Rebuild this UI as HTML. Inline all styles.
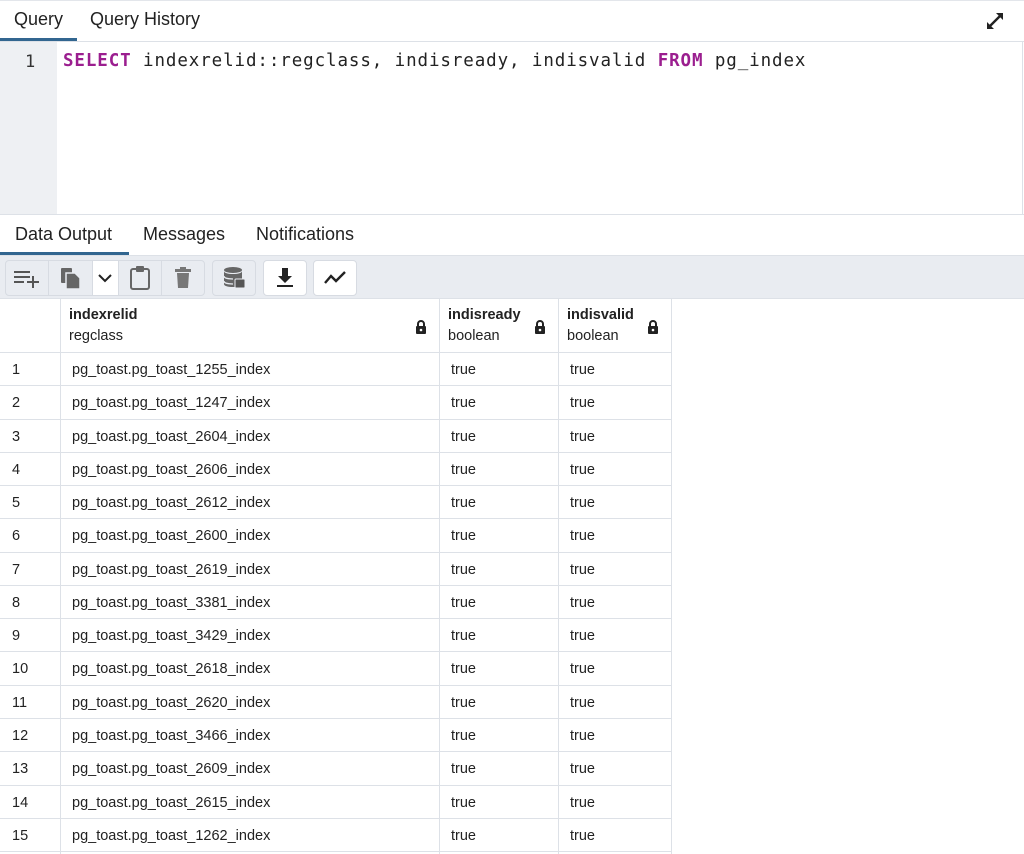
<!DOCTYPE html>
<html><head><meta charset="utf-8"><style>
*{box-sizing:border-box;margin:0;padding:0}
body{width:1024px;height:854px;overflow:hidden;background:#fff;font-family:"Liberation Sans",sans-serif;color:#222;position:relative}
.abs{position:absolute}
.tab{position:absolute;font-size:18px;color:#222;top:9px}
.mono{font-family:"DejaVu Sans Mono","Liberation Mono",monospace}
.btn{position:absolute;top:260px;height:36px;border:1px solid #d7dbe2;background:#e9ecf1;border-radius:4px}
.btnw{background:#fff}
.cell{position:absolute;font-size:14.5px;color:#222}
.hl{position:absolute;height:1px;background:#dde1e7}
.vl{position:absolute;width:1px;background:#dde1e7}
</style></head><body>
<div class="abs" style="left:0;top:0;width:1024px;height:1px;background:#e3e6eb"></div>
<div class="tab" style="left:14px">Query</div>
<div class="tab" style="left:90px">Query History</div>
<div class="abs" style="left:0;top:38px;width:77px;height:3px;background:#326690"></div>
<div class="abs" style="left:0;top:41px;width:1024px;height:1px;background:#dde1e7"></div>
<svg class="abs" style="left:984px;top:10px" width="22" height="22" viewBox="0 0 22 22"><path d="M4 18 L18 4" stroke="#222" stroke-width="2.4"/><path d="M3 19 L3 12 L10 19Z M19 3 L19 10 L12 3Z" fill="#222"/></svg>
<div class="abs" style="left:0;top:42px;width:57px;height:172px;background:#eef0f3"></div>
<div class="abs mono" style="left:25px;top:52px;font-size:17px;color:#333">1</div>
<div class="abs mono" style="left:63px;top:51px;font-size:17.5px;letter-spacing:0.9px;color:#222;white-space:pre"><span style="color:#9b1e8f;font-weight:bold">SELECT</span> indexrelid::regclass, indisready, indisvalid <span style="color:#9b1e8f;font-weight:bold">FROM</span> pg_index</div>
<div class="abs" style="left:0;top:214px;width:1024px;height:1px;background:#dde1e7"></div>
<div class="abs" style="left:1022px;top:42px;width:1px;height:172px;background:#dde1e7"></div>
<div class="tab" style="left:15px;top:224px">Data Output</div>
<div class="tab" style="left:143px;top:224px">Messages</div>
<div class="tab" style="left:256px;top:224px">Notifications</div>
<div class="abs" style="left:0;top:252px;width:129px;height:3px;background:#326690"></div>
<div class="abs" style="left:0;top:255px;width:1024px;height:44px;background:#e9ecf1;border-top:1px solid #dde1e7;border-bottom:1px solid #dde1e7"></div>
<div class="btn" style="left:5px;width:200px"></div>
<div class="abs" style="left:92px;top:261px;width:26px;height:34px;background:#fff"></div>
<div class="vl" style="left:48px;top:261px;height:34px;background:#d7dbe2"></div>
<div class="vl" style="left:92px;top:261px;height:34px;background:#d7dbe2"></div>
<div class="vl" style="left:118px;top:261px;height:34px;background:#d7dbe2"></div>
<div class="vl" style="left:161px;top:261px;height:34px;background:#d7dbe2"></div>
<div class="btn" style="left:212px;width:44px"></div>
<div class="btn btnw" style="left:263px;width:44px"></div>
<div class="btn btnw" style="left:313px;width:44px"></div>
<svg class="abs" style="left:13px;top:268px" width="28" height="20"><path d="M1 4h16M1 9h16M1 14h10M14 14h12M20 8v12" stroke="#555" stroke-width="2"/></svg>
<svg class="abs" style="left:59px;top:266px" width="24" height="24"><rect x="2" y="2" width="11" height="15" rx="1" fill="#666"/><path d="M7 7h9l5 5v11H7z" fill="#666" stroke="#e9ecf1" stroke-width="1.5"/></svg>
<svg class="abs" style="left:97px;top:272px" width="16" height="12"><path d="M2 3l6 6 6-6" stroke="#222" stroke-width="2" fill="none"/></svg>
<svg class="abs" style="left:129px;top:265px" width="22" height="26"><rect x="2" y="4" width="18" height="20" rx="2" fill="none" stroke="#666" stroke-width="2"/><rect x="7" y="1" width="8" height="6" rx="1" fill="#666"/></svg>
<svg class="abs" style="left:174px;top:266px" width="18" height="24"><rect x="1" y="3" width="16" height="3" fill="#777"/><rect x="6" y="1" width="6" height="3" fill="#777"/><path d="M3 7h12l-1 15H4z" fill="#777"/></svg>
<svg class="abs" style="left:222px;top:266px" width="26" height="24"><ellipse cx="11" cy="4" rx="9" ry="3" fill="#666"/><path d="M2 5v13c0 2 4 3 9 3s9-1 9-3V5c0 2-4 3-9 3S2 7 2 5z" fill="#666"/><path d="M2 10c0 2 4 3 9 3M2 15c0 2 4 3 9 3" stroke="#e9ecf1" stroke-width="1.2" fill="none"/><rect x="13" y="13" width="10" height="9" rx="1" fill="#555" stroke="#e9ecf1"/></svg>
<svg class="abs" style="left:275px;top:267px" width="20" height="22"><path d="M7 1h6v8h4l-7 7-7-7h4z" fill="#222"/><rect x="2" y="18" width="16" height="2" fill="#222"/></svg>
<svg class="abs" style="left:323px;top:270px" width="24" height="16"><path d="M2 13l6-7 5 5 9-9" stroke="#222" stroke-width="2.4" fill="none"/></svg>
<div class="cell" style="left:69px;top:307px;font-weight:bold">indexrelid</div>
<div class="cell" style="left:69px;top:328px">regclass</div>
<div class="cell" style="left:448px;top:307px;font-weight:bold">indisready</div>
<div class="cell" style="left:448px;top:328px">boolean</div>
<div class="cell" style="left:567px;top:307px;font-weight:bold">indisvalid</div>
<div class="cell" style="left:567px;top:328px">boolean</div>
<svg class="abs" style="left:415px;top:319px" width="12" height="16"><path d="M3 7V5a3 3 0 016 0v2" stroke="#222" stroke-width="2" fill="none"/><rect x="1" y="7" width="10" height="8" rx="1" fill="#222"/><circle cx="6" cy="11" r="1.3" fill="#fff"/></svg>
<svg class="abs" style="left:534px;top:319px" width="12" height="16"><path d="M3 7V5a3 3 0 016 0v2" stroke="#222" stroke-width="2" fill="none"/><rect x="1" y="7" width="10" height="8" rx="1" fill="#222"/><circle cx="6" cy="11" r="1.3" fill="#fff"/></svg>
<svg class="abs" style="left:647px;top:319px" width="12" height="16"><path d="M3 7V5a3 3 0 016 0v2" stroke="#222" stroke-width="2" fill="none"/><rect x="1" y="7" width="10" height="8" rx="1" fill="#222"/><circle cx="6" cy="11" r="1.3" fill="#fff"/></svg>
<div class="vl" style="left:60px;top:299px;height:555px"></div>
<div class="vl" style="left:439px;top:299px;height:555px"></div>
<div class="vl" style="left:558px;top:299px;height:555px"></div>
<div class="vl" style="left:671px;top:299px;height:555px"></div>
<div class="hl" style="left:0;top:352px;width:672px"></div>
<div id="rows"></div>
<script>
var ids=[1255,1247,2604,2606,2612,2600,2619,3381,3429,2618,2620,3466,2609,2615,1262];
var h='';
for(var i=0;i<15;i++){var t=353+i*33.27;
h+='<div class="cell" style="left:12px;top:'+(t+9)+'px">'+(i+1)+'</div>'+
'<div class="cell" style="left:72px;top:'+(t+9)+'px">pg_toast.pg_toast_'+ids[i]+'_index</div>'+
'<div class="cell" style="left:451px;top:'+(t+9)+'px">true</div>'+
'<div class="cell" style="left:570px;top:'+(t+9)+'px">true</div>'+
'<div class="hl" style="left:0;top:'+(t+32.3)+'px;width:672px"></div>';}
document.getElementById('rows').innerHTML=h;
</script>
</body></html>
